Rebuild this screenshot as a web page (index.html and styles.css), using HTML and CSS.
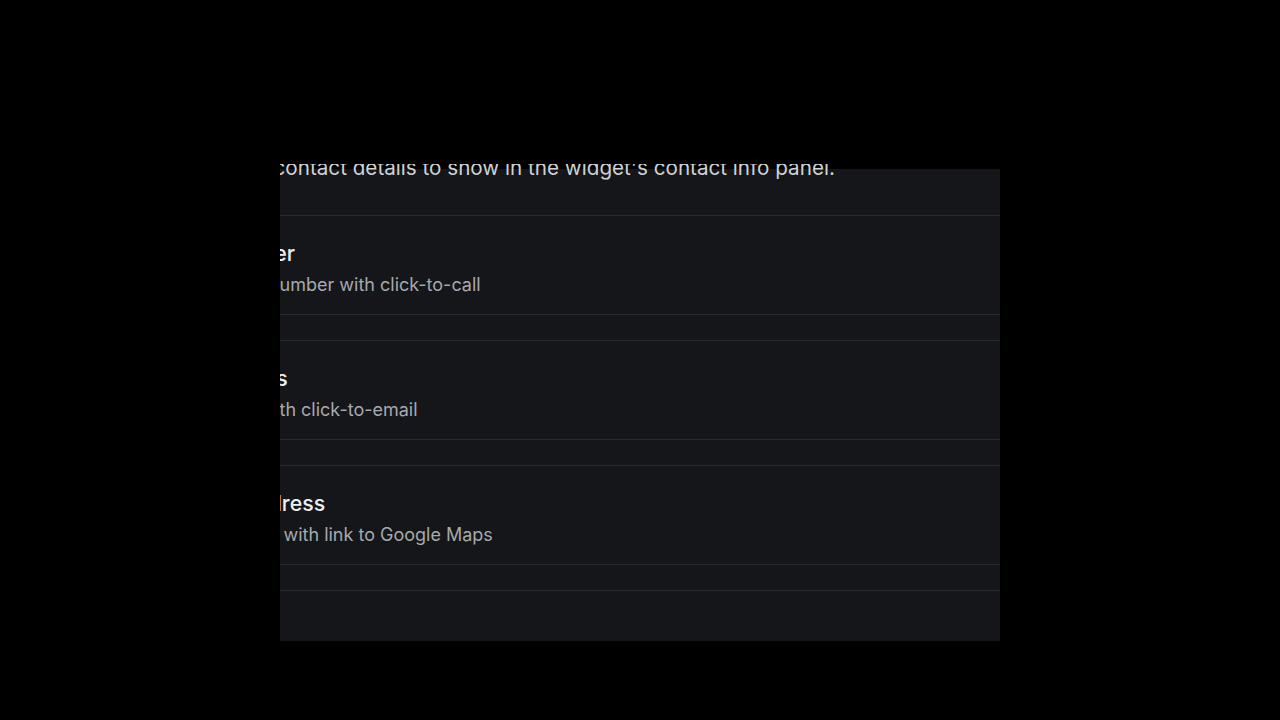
FILE: index.html
```html
<!DOCTYPE html>
<html lang="en">
<head>
<meta charset="utf-8">
<title>Contact Info Settings</title>
<link rel="stylesheet" href="styles.css">
</head>
<body>
<div class="stage">
  <div class="viewport">
    <div class="panel">
      <p class="desc">Select which contact details to show in the widget's contact info panel.</p>
      <div class="list">
        <div class="card">
          <div class="card-title">Phone Number</div>
          <div class="card-sub">Display phone number with click-to-call</div>
        </div>
        <div class="card">
          <div class="card-title">Email Address</div>
          <div class="card-sub">Display email with click-to-email</div>
        </div>
        <div class="card">
          <div class="card-title">Business Address</div>
          <div class="card-sub">Display address with link to Google Maps</div>
        </div>
        <div class="card card-empty"></div>
      </div>
    </div>
  </div>
</div>
</body>
</html>
```

FILE: styles.css
```css
html, body {
  margin: 0;
  padding: 0;
  background: #000;
  width: 1280px;
  height: 720px;
  overflow: hidden;
  font-family: Inter, "Noto Sans", sans-serif;
}

.stage {
  padding-top: 164px;
  padding-left: 280px;
}

.viewport {
  width: 720px;
  height: 477px;
  overflow: hidden;
  background: linear-gradient(#000 0, #000 5px, #141619 5px);
}

.panel {
  width: 1100px;
  margin-top: -11px;
  margin-left: -137px;
}

.desc {
  margin: 0;
  font-size: 20.65px;
  line-height: 30px;
  color: #cfd1d4;
}

.list {
  margin-top: 32px;
  display: flex;
  flex-direction: column;
  gap: 25px;
}

.card {
  border-top: 1px solid #282b2f;
  border-bottom: 1px solid #282b2f;
  padding: 23px 0 16px 0;
}

.card-empty {
  height: 80px;
}

.card-title {
  font-size: 21.3px;
  line-height: 28px;
  font-weight: 500;
  color: #eceef0;
}

.card-sub {
  margin-top: 5px;
  font-size: 18px;
  line-height: 26px;
  color: #a6a9ad;
}
```
